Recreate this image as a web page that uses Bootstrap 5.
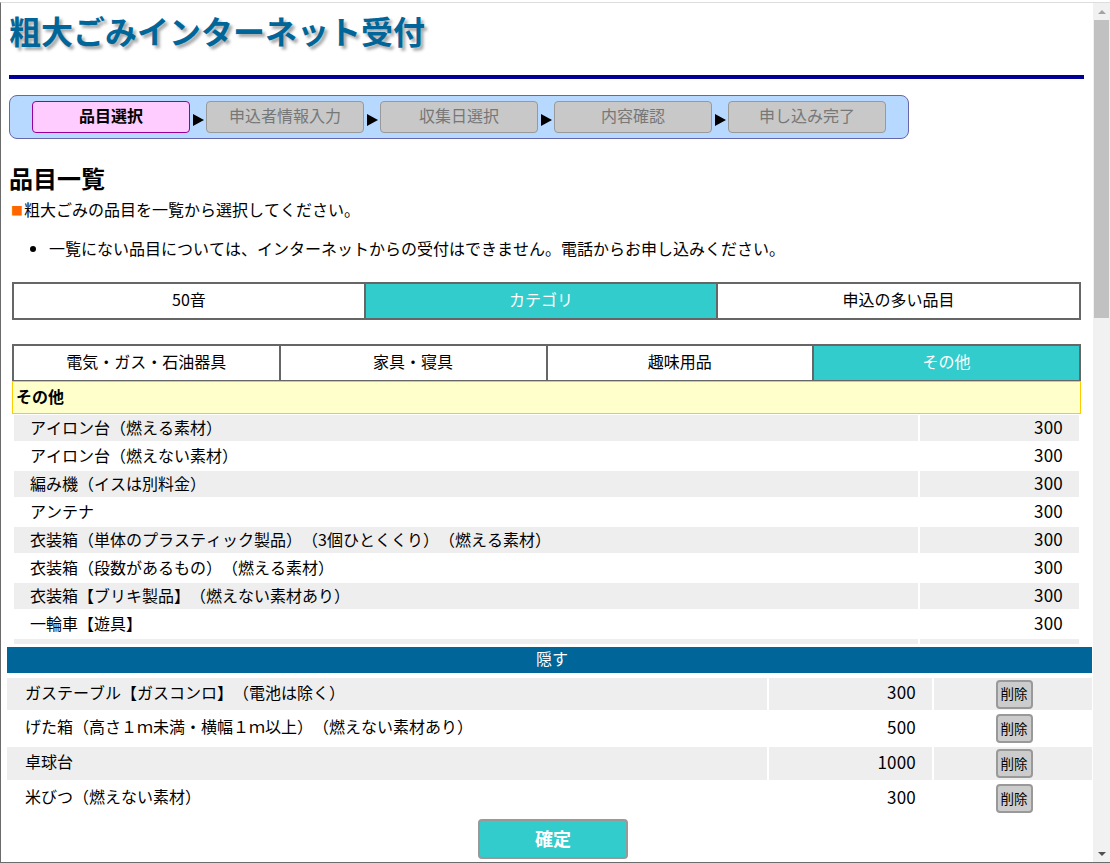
<!DOCTYPE html>
<html lang="ja">
<head>
<meta charset="utf-8">
<title>粗大ごみインターネット受付</title>
<link rel="stylesheet" href="https://cdn.jsdelivr.net/npm/bootstrap@5.3.0/dist/css/bootstrap.min.css">
<style>
html,body{height:100%;overflow:hidden;background:#fff}
body{font-family:"Noto Sans CJK JP","Liberation Sans",sans-serif;font-size:16px;line-height:1.4;color:#000;text-spacing-trim:space-all;font-kerning:none}
.frame{height:863px;padding-top:2px;background:#fff}
.frame-in{border-top:1px solid #ddd;border-left:1px solid #6b6b6b;border-bottom:1px solid #6b6b6b;height:861px}
.main-col{width:1092px;min-width:0}
.upper{height:641px;padding:0 9px 0 8px;overflow:hidden;flex:none}
.site-title{font-size:32px;font-weight:700;color:#069;text-shadow:3px 3px 3px #aaa;line-height:44px;margin:5px 0 0;height:67px}
.blue-line{height:4px;background:#009;margin:0 0 16px}
.steps{width:900px;height:44px;background:#b8d9ff;border:1px solid #66a;border-radius:8px;padding:5px 0 0 22px}
.step{width:158px;height:32px;border:1px solid #999;border-radius:4px;background:#c8c8c8;color:#777;display:flex;align-items:center;justify-content:center;font-size:16px;padding-bottom:3px}
.step-on{background:#fcf;border-color:#909;color:#000;font-weight:700}
.arr{width:16px;font-size:0;display:flex;align-items:center;justify-content:center}
.arr i{display:block;border-left:11px solid #000;border-top:6px solid transparent;border-bottom:6px solid transparent}
.page-h{font-size:24px;font-weight:700;margin:24px 0 0;line-height:30px}
.lead-line{margin:6px 0 0 2px;line-height:20px}
.sq{color:#f60;font-size:12px;display:inline-block;width:13px;line-height:1}
.note{margin:18px 0 0;padding-left:40px;line-height:22px}
.tabs{margin:23px 3px 0;border:2px solid #666;height:38px;background:#fff}
.tabs2{margin-top:24px}
.tb{flex:1 1 0;display:flex;align-items:center;justify-content:center;border-left:2px solid #666;padding-bottom:3px}
.tb:first-child{border-left:0}
.tb-wide{flex:none;width:363px}
.tb-on{background:#3cc;color:#fff}
.cat-head{margin:-1px 3px 0;height:33px;line-height:28px;background:#ffc;border:1px solid #fc0;font-weight:700;padding-left:3px}
.items{border-collapse:separate;border-spacing:2px;width:1069px;margin:-1px 3px 0;table-layout:fixed}
.items td{padding:0 0 2px;height:26px;line-height:24px;white-space:nowrap}
.items .nm{padding-left:16px}
.items .pr{width:159px;text-align:right;padding-right:16px;font-size:17px;letter-spacing:.2px}
.items tr:nth-child(odd) td{background:#eee}
.hide-bar{height:26px;margin:3px 1px 0 6px;padding-left:5px;background:#069;color:#fff;text-align:center;line-height:23px;flex:none}
.picked{border-collapse:separate;border-spacing:0 2px;margin:3px 0 0 6px;width:1085px;table-layout:fixed;flex:none}
.picked td{padding:0;height:33px;white-space:nowrap;vertical-align:middle}
.picked tr:first-child td{height:32px}
.picked .nm{padding:0 0 4px 18px}
.picked .pr{width:165px;text-align:right;padding:0 16px 4px 0;border-left:2px solid #fff;font-size:17px;letter-spacing:.2px}
.picked .ac{width:160px;text-align:center;border-left:2px solid #fff}
.picked tr:nth-child(odd) td{background:#eee}
.del{display:inline-flex;align-items:center;justify-content:center;width:37px;height:29px;padding:0;margin-left:2px;background:#ccc;border:2px solid #999;border-radius:4px;font-size:13.5px;color:#000;vertical-align:middle;line-height:1}
.ok{display:block;width:150px;height:40px;margin:2px 0 0 477px;background:#3cc;border:2px solid #999;border-radius:4px;color:#fff;font-weight:700;font-size:18px;padding:0 0 2px;flex:none}
.sbar{width:17px;background:#f1f1f1;flex:none;height:100%}
.sb-arrow{height:17px;display:flex;align-items:center;justify-content:center}
.sb-thumb{height:298px;margin:0 1px;background:#c1c1c1}
.tri-u{border-bottom:4px solid #a3a3a3;border-left:4px solid transparent;border-right:4px solid transparent}
.tri-d{border-top:4px solid #505050;border-left:4px solid transparent;border-right:4px solid transparent}
</style>
</head>
<body class="m-0">
<div class="frame">
<div class="frame-in d-flex">
  <div class="main-col d-flex flex-column">
    <div class="upper">
      <h1 class="site-title">粗大ごみインターネット受付</h1>
      <div class="blue-line"></div>
      <div class="steps d-flex">
        <div class="step step-on">品目選択</div><div class="arr"><i></i></div>
        <div class="step">申込者情報入力</div><div class="arr"><i></i></div>
        <div class="step">収集日選択</div><div class="arr"><i></i></div>
        <div class="step">内容確認</div><div class="arr"><i></i></div>
        <div class="step">申し込み完了</div>
      </div>
      <h2 class="page-h">品目一覧</h2>
      <p class="lead-line"><span class="sq">■</span>粗大ごみの品目を一覧から選択してください。</p>
      <ul class="note mb-0"><li>一覧にない品目については、インターネットからの受付はできません。電話からお申し込みください。</li></ul>
      <div class="tabs d-flex">
        <div class="tb">50音</div><div class="tb tb-on">カテゴリ</div><div class="tb tb-wide">申込の多い品目</div>
      </div>
      <div class="tabs tabs2 d-flex">
        <div class="tb">電気・ガス・石油器具</div><div class="tb">家具・寝具</div><div class="tb">趣味用品</div><div class="tb tb-on">その他</div>
      </div>
      <div class="cat-head">その他</div>
      <table class="items">
        <tr><td class="nm">アイロン台（燃える素材）</td><td class="pr">300</td></tr>
        <tr><td class="nm">アイロン台（燃えない素材）</td><td class="pr">300</td></tr>
        <tr><td class="nm">編み機（イスは別料金）</td><td class="pr">300</td></tr>
        <tr><td class="nm">アンテナ</td><td class="pr">300</td></tr>
        <tr><td class="nm">衣装箱（単体のプラスティック製品）（3個ひとくくり）（燃える素材）</td><td class="pr">300</td></tr>
        <tr><td class="nm">衣装箱（段数があるもの）（燃える素材）</td><td class="pr">300</td></tr>
        <tr><td class="nm">衣装箱【ブリキ製品】（燃えない素材あり）</td><td class="pr">300</td></tr>
        <tr><td class="nm">一輪車【遊具】</td><td class="pr">300</td></tr>
        <tr><td class="nm">オイルヒーター</td><td class="pr">300</td></tr>
      </table>
    </div>
    <div class="hide-bar">隠す</div>
    <table class="picked">
      <tr><td class="nm">ガステーブル【ガスコンロ】（電池は除く）</td><td class="pr">300</td><td class="ac"><button type="button" class="btn del">削除</button></td></tr>
      <tr><td class="nm">げた箱（高さ１ｍ未満・横幅１ｍ以上）（燃えない素材あり）</td><td class="pr">500</td><td class="ac"><button type="button" class="btn del">削除</button></td></tr>
      <tr><td class="nm">卓球台</td><td class="pr">1000</td><td class="ac"><button type="button" class="btn del">削除</button></td></tr>
      <tr><td class="nm">米びつ（燃えない素材）</td><td class="pr">300</td><td class="ac"><button type="button" class="btn del">削除</button></td></tr>
    </table>
    <button type="button" class="btn ok">確定</button>
  </div>
  <div class="sbar d-flex flex-column">
    <div class="sb-arrow"><span class="tri-u"></span></div>
    <div class="sb-thumb"></div>
    <div class="flex-grow-1"></div>
    <div class="sb-arrow"><span class="tri-d"></span></div>
  </div>
</div>
</div>
<script src="https://cdn.jsdelivr.net/npm/bootstrap@5.3.0/dist/js/bootstrap.bundle.min.js"></script>
</body>
</html>
